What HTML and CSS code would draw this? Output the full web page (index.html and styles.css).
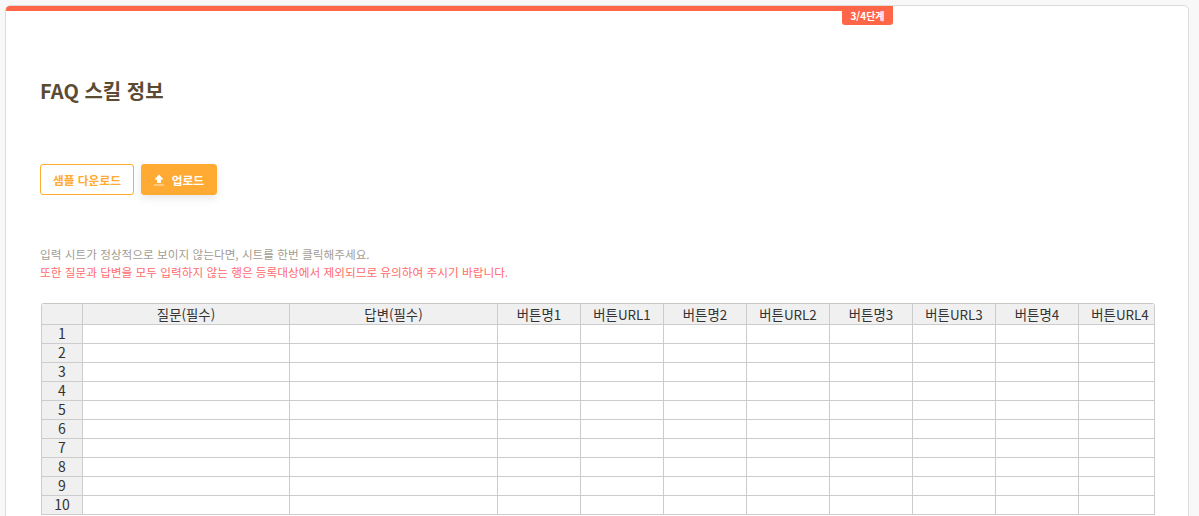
FILE: index.html
```html
<!DOCTYPE html>
<html lang="ko">
<head>
<meta charset="utf-8">
<title>FAQ 스킬 정보</title>
<link rel="stylesheet" href="styles.css">
</head>
<body>
<main class="card">
  <div class="progress"><div class="progress-fill"></div><span class="badge">3/4단계</span></div>
  <h1 class="title">FAQ 스킬 정보</h1>
  <div class="actions">
    <button class="btn btn-outline" type="button">샘플 다운로드</button>
    <button class="btn btn-fill" type="button">
      <svg class="btn-icon" viewBox="0 0 10 12" width="10" height="12" aria-hidden="true"><path d="M5 0.5 9.5 5.5H7V9H3V5.5H0.5Z" fill="#fff"/><rect x="0" y="10.5" width="10" height="1" fill="#ffe9c8"/></svg>
      업로드
    </button>
  </div>
  <div class="notes">
    <p class="note">입력 시트가 정상적으로 보이지 않는다면, 시트를 한번 클릭해주세요.</p>
    <p class="note note-red">또한 질문과 답변을 모두 입력하지 않는 행은 등록대상에서 제외되므로 유의하여 주시기 바랍니다.</p>
  </div>
  <div class="sheet">
    <table class="grid">
      <colgroup>
        <col class="c-idx"><col class="c-q"><col class="c-a">
        <col class="c-b"><col class="c-b"><col class="c-b"><col class="c-b"><col class="c-b"><col class="c-b"><col class="c-b"><col class="c-b">
      </colgroup>
      <thead>
        <tr><th></th><th>질문(필수)</th><th>답변(필수)</th><th>버튼명1</th><th>버튼URL1</th><th>버튼명2</th><th>버튼URL2</th><th>버튼명3</th><th>버튼URL3</th><th>버튼명4</th><th>버튼URL4</th></tr>
      </thead>
      <tbody>
        <tr><th>1</th><td></td><td></td><td></td><td></td><td></td><td></td><td></td><td></td><td></td><td></td></tr>
        <tr><th>2</th><td></td><td></td><td></td><td></td><td></td><td></td><td></td><td></td><td></td><td></td></tr>
        <tr><th>3</th><td></td><td></td><td></td><td></td><td></td><td></td><td></td><td></td><td></td><td></td></tr>
        <tr><th>4</th><td></td><td></td><td></td><td></td><td></td><td></td><td></td><td></td><td></td><td></td></tr>
        <tr><th>5</th><td></td><td></td><td></td><td></td><td></td><td></td><td></td><td></td><td></td><td></td></tr>
        <tr><th>6</th><td></td><td></td><td></td><td></td><td></td><td></td><td></td><td></td><td></td><td></td></tr>
        <tr><th>7</th><td></td><td></td><td></td><td></td><td></td><td></td><td></td><td></td><td></td><td></td></tr>
        <tr><th>8</th><td></td><td></td><td></td><td></td><td></td><td></td><td></td><td></td><td></td><td></td></tr>
        <tr><th>9</th><td></td><td></td><td></td><td></td><td></td><td></td><td></td><td></td><td></td><td></td></tr>
        <tr><th>10</th><td></td><td></td><td></td><td></td><td></td><td></td><td></td><td></td><td></td><td></td></tr>
      </tbody>
    </table>
  </div>
</main>
</body>
</html>
```
FILE: styles.css
```css
* { box-sizing: border-box; }
html, body { height: 100%; }
body {
  margin: 0;
  padding: 5px 10px 0 5px;
  background: #f8f8f8;
  font-family: "Noto Sans CJK KR", "Noto Sans", sans-serif;
  overflow: hidden;
}
.card {
  position: relative;
  width: 1184px;
  height: 600px;
  background: #fff;
  border: 1px solid #dedcd8;
  border-radius: 5px;
  padding: 0 34px;
}
.progress { position: absolute; top: 0; left: 0; right: 0; height: 5px; }
.progress-fill {
  width: 75%;
  height: 5px;
  background: #ff6647;
  border-radius: 4px 0 0 0;
}
.badge {
  position: absolute;
  top: 0;
  left: 836px;
  width: 51px;
  height: 19px;
  background: #ff6647;
  color: #fff;
  font-size: 10px;
  font-weight: 700;
  line-height: 19px;
  text-align: center;
  border-radius: 0 0 3px 3px;
}
.title {
  margin: 0;
  padding-top: 70px;
  height: 158px;
  font-size: 20px;
  line-height: 30px;
  font-weight: 700;
  color: #5c4b33;
}
.actions { display: flex; gap: 7px; height: 31px; }
.btn {
  height: 31px;
  margin: 0;
  padding: 0;
  border-radius: 3px;
  font-family: inherit;
  font-size: 11.7px;
  font-weight: 700;
  line-height: 1;
}
.btn-outline {
  width: 94px;
  background: #fff;
  color: #ffab33;
  border: 1px solid #ffab33;
}
.btn-fill {
  display: flex;
  align-items: center;
  justify-content: center;
  gap: 8px;
  width: 76px;
  background: #ffab33;
  color: #fff;
  border: 1px solid #ffab33;
  box-shadow: 0 3px 8px rgba(0, 0, 0, 0.1);
}
.btn-icon { display: block; }
.notes { margin-top: 50px; }
.note {
  margin: 0;
  font-size: 11.67px;
  line-height: 18px;
  color: #a29d92;
}
.note-red { color: #ff6b6b; }
.sheet {
  width: 1114px;
  margin-top: 22px;
  margin-left: 1px;
  overflow: hidden;
  border-right: 1px solid #ccc;
  border-radius: 3px 3px 0 0;
}
.grid {
  table-layout: fixed;
  width: 1120px;
  border-collapse: collapse;
  color: #333;
  font-size: 13.4px;
}
.c-idx { width: 41px; }
.c-q { width: 207px; }
.c-a { width: 208px; }
.c-b { width: 83px; }
.grid th, .grid td {
  height: 19px;
  padding: 0;
  border: 1px solid #ccc;
  font-weight: 400;
  text-align: center;
  line-height: 18px;
  overflow: hidden;
  white-space: nowrap;
}
.grid thead th { height: 21px; background: #f0f0f0; line-height: 20px; border-top-color: #c8c6c0; }
.grid tbody th { background: #f0f0f0; font-size: 14px; line-height: 17px; vertical-align: top; }
```
